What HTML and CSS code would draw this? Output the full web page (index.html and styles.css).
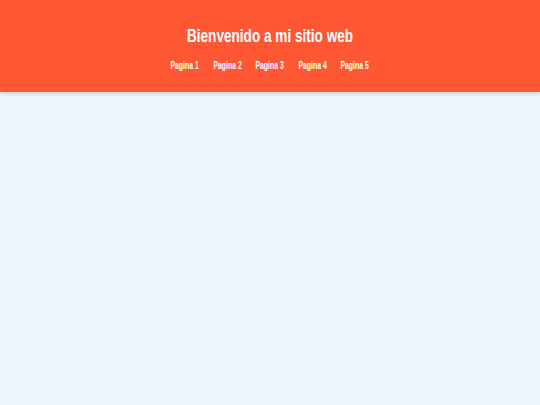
FILE: index.html
```html
<!DOCTYPE html>
<html lang="es">
<head>
<meta charset="utf-8">
<title>Mi sitio web</title>
<link rel="stylesheet" href="styles.css">
</head>
<body>
<header class="site-header">
  <h1 class="site-title"><span class="narrow">Bienvenido a mi sitio web</span></h1>
  <nav class="site-nav">
    <a href="#"><span class="narrow-sm">Pagina 1</span></a>
    <a href="#"><span class="narrow-sm">Pagina 2</span></a>
    <a href="#"><span class="narrow-sm">Pagina 3</span></a>
    <a href="#"><span class="narrow-sm">Pagina 4</span></a>
    <a href="#"><span class="narrow-sm">Pagina 5</span></a>
  </nav>
</header>
<main class="content"></main>
</body>
</html>
```
FILE: styles.css
```css
html, body {
  margin: 0;
  padding: 0;
}
body {
  background: #eef5fd;
  font-family: "Liberation Sans", Arial, sans-serif;
  height: 405px;
}
.site-header {
  background: #ff5733;
  color: #ffffff;
  text-align: center;
  height: 92px;
  box-sizing: border-box;
  padding-top: 26px;
  box-shadow: 0 2px 4px rgba(0,0,0,0.15);
}
.site-title {
  margin: 0;
  font-size: 18px;
  font-weight: bold;
  line-height: 21px;
}
.narrow {
  display: inline-block;
  transform: scaleX(0.755);
  white-space: nowrap;
}
.site-nav {
  display: flex;
  justify-content: center;
  gap: 14.5px;
  margin-top: 13px;
}
.site-nav a {
  display: flex;
  justify-content: center;
  width: 28px;
  color: #ffffff;
  text-decoration: none;
  font-size: 10px;
  font-weight: bold;
  line-height: 12px;
  white-space: nowrap;
}
.narrow-sm {
  display: inline-block;
  transform: scaleX(0.69);
}
```
